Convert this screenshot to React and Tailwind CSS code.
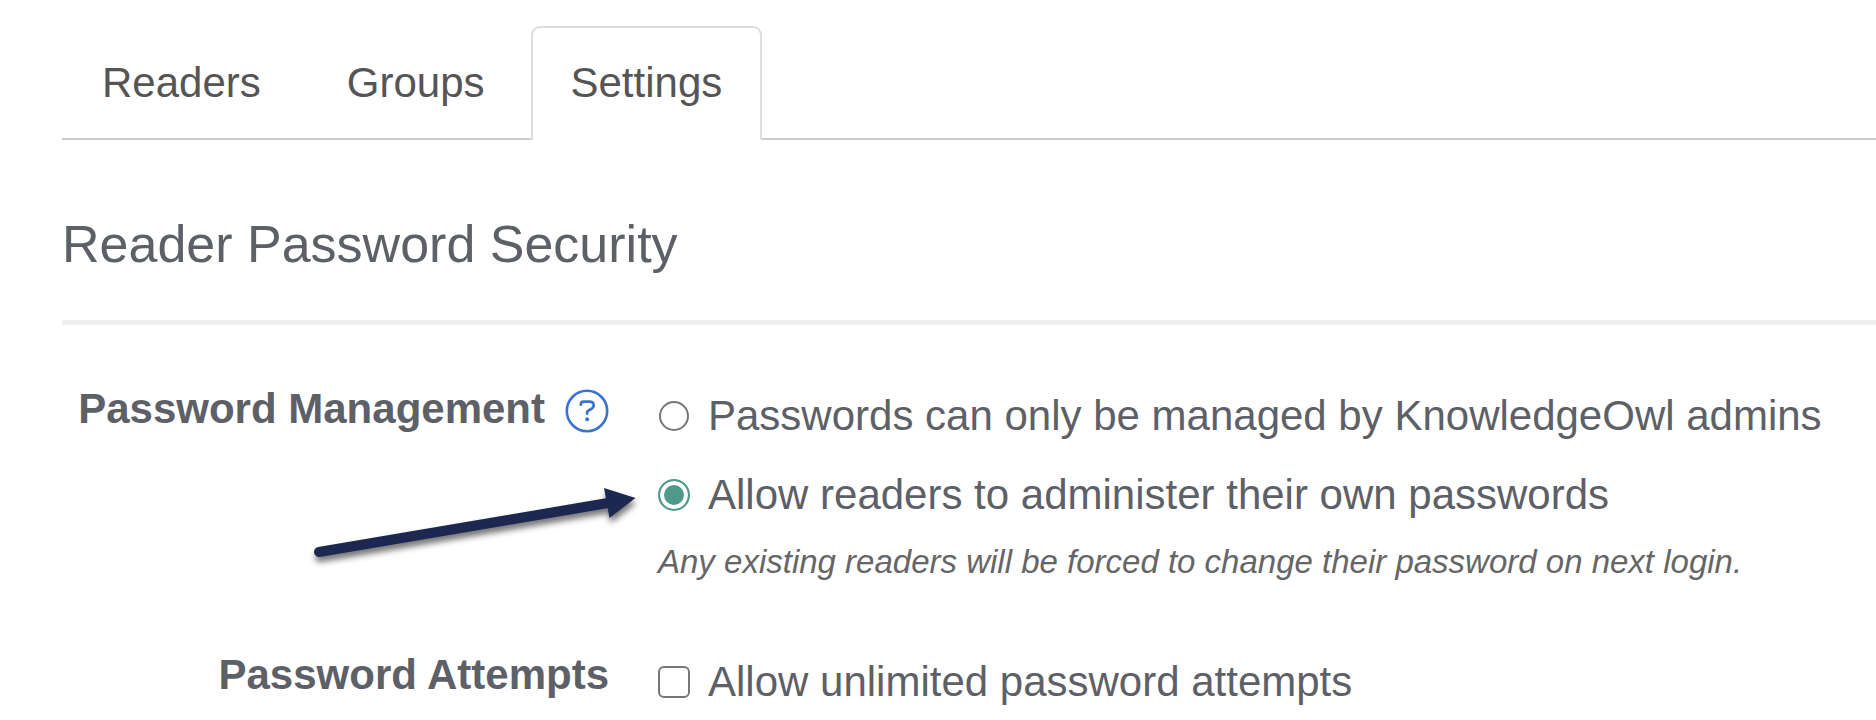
const tabs = ["Readers", "Groups", "Settings"];

function Tab({ label, active }) {
  return (
    <button
      type="button"
      role="tab"
      aria-selected={active}
      className={
        active
          ? "-mb-[2px] rounded-t-[9px] border-2 border-b-0 border-[#dddddd] bg-white px-[38px] pt-[25px] pb-[27px] text-[42px] leading-[60px] text-[#555555]"
          : "-mb-[2px] border-2 border-b-0 border-transparent px-[38px] pt-[25px] pb-[27px] text-[42px] leading-[60px] text-[#555555]"
      }
    >
      {label}
    </button>
  );
}

function HelpIcon() {
  return (
    <svg viewBox="0 0 44 44" className="size-11" fill="none" stroke="#3a72d0" aria-hidden="true">
      <circle cx="22" cy="22" r="20.2" strokeWidth="2.6" />
      <path
        d="M15.800 15.800v-.4c0-1.700 1.100-2.800 2.800-2.800h5.600c2.700 0 4.500 1.500 4.500 3.700 0 1.700-.9 2.800-2.500 3.700l-2.700 1.500c-.9.500-1.400 1.100-1.400 2v1.200"
        strokeWidth="2.6"
        strokeLinecap="round"
      />
      <circle cx="22.1" cy="30.300" r="2" fill="#3a72d0" stroke="none" />
    </svg>
  );
}

function Arrow() {
  return (
    <svg
      viewBox="0 0 340 90"
      className="pointer-events-none absolute top-[96px] left-[246px] h-[90px] w-[340px] drop-shadow-[1px_5px_3px_rgba(0,0,0,0.55)]"
      aria-hidden="true"
    >
      <path d="M11 77L300 28" stroke="#1c284f" strokeWidth="10" strokeLinecap="round" />
      <path d="M296 13L327.500 23L301.500 43Z" fill="#1c284f" />
    </svg>
  );
}

export default function App() {
  return (
    <main className="bg-white pt-[26px] pl-[62px] font-['Liberation_Sans',Arial,sans-serif] text-[#5d6067]">
      <div role="tablist" className="flex gap-[6px] border-b-2 border-[#cccccc]">
        {tabs.map((label) => (
          <Tab key={label} label={label} active={label === "Settings"} />
        ))}
      </div>

      <h2 className="mt-[74px] text-[52px] leading-[60px]">Reader Password Security</h2>
      <hr className="mt-[46px] border-t-[5px] border-[#eeeeee]" />

      <form className="relative mt-[54px] grid grid-cols-[547px_1fr] gap-x-[49px] gap-y-[59px] text-[42px] leading-[60px]">
        <div className="flex items-center justify-end gap-5 self-start font-bold">
          <span id="management">Password Management</span>
          <button type="button" aria-label="Help" className="pt-1">
            <HelpIcon />
          </button>
        </div>
        <div role="radiogroup" aria-labelledby="management" className="pt-[7px]">
          <label className="flex items-center gap-[18px]">
            <input
              type="radio"
              name="management"
              className="mx-px size-[30px] appearance-none rounded-full border-2 border-[#767676]"
            />
            Passwords can only be managed by KnowledgeOwl admins
          </label>
          <label className="mt-[19px] flex items-center gap-[18px]">
            <input
              type="radio"
              name="management"
              defaultChecked
              className="size-8 appearance-none rounded-full border-2 border-[#4f998a] bg-[#4f998a] shadow-[inset_0_0_0_4px_white]"
            />
            Allow readers to administer their own passwords
          </label>
          <p className="mt-[13px] text-[33px] leading-[48px] text-[#666666] italic">
            Any existing readers will be forced to change their password on next login.
          </p>
        </div>

        <span id="attempts" className="self-start text-right font-bold">
          Password Attempts
        </span>
        <label className="flex items-center gap-[18px] pt-[7px]">
          <input
            type="checkbox"
            aria-describedby="attempts"
            className="size-8 appearance-none rounded-[6px] border-2 border-[#767676]"
          />
          Allow unlimited password attempts
        </label>
        <Arrow />
      </form>
    </main>
  );
}
